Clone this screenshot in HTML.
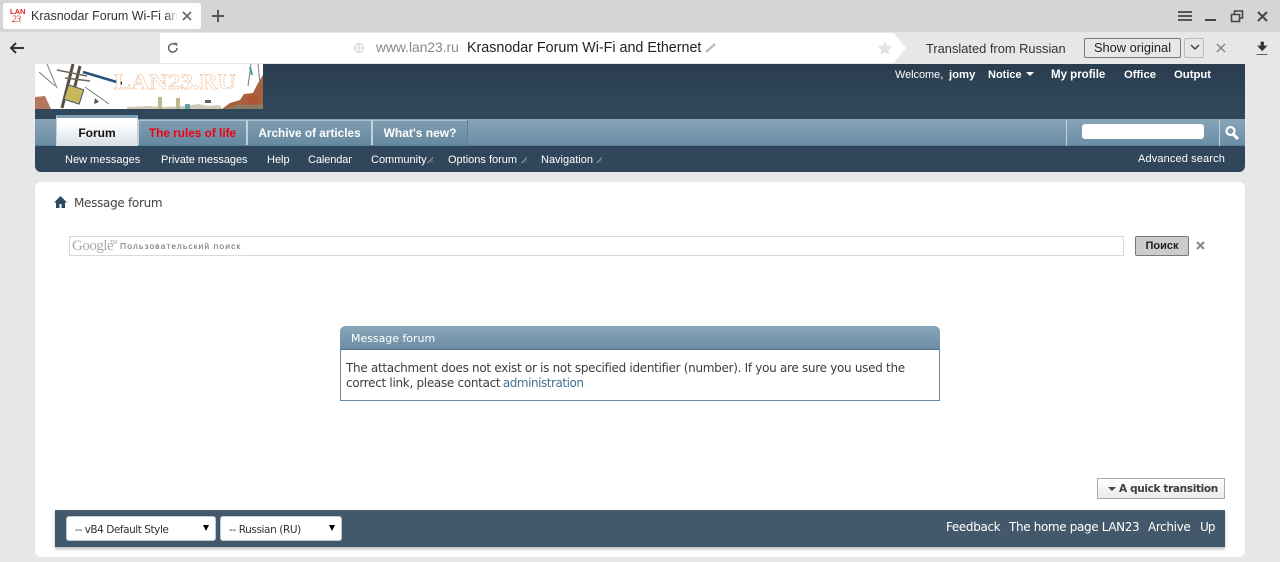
<!DOCTYPE html>
<html><head><meta charset="utf-8"><style>
html,body{margin:0;padding:0;width:1280px;height:562px;overflow:hidden;background:#e7e7e7;font-family:"Liberation Sans",sans-serif}
.a{position:absolute;white-space:nowrap}
.nav{font-size:11px;color:#fff;top:154px;line-height:13px}
.top{font-size:11px;color:#fff;top:69px;line-height:13px;font-weight:bold}
.tab{position:absolute;top:120px;height:25px;border-left:1px solid #c2d2dd;border-right:1px solid #c2d2dd;border-top:1px solid #a9bfce;background:linear-gradient(#7f9bb0,#658aa2);box-sizing:border-box;color:#fff;font-weight:bold;font-size:11.8px;text-align:center;line-height:25px}
.v{font-family:"DejaVu Sans",sans-serif}
.ar{position:absolute;width:6px;height:6px;top:157px;background:linear-gradient(135deg,transparent 48%,#80909e 48%,#80909e 60%,#46596b 60%)}
.f{top:520px;font-size:12px;line-height:15px;color:#fff;letter-spacing:-.36px}
</style></head><body>
<div class="a" style="left:0;top:0;width:1280px;height:32px;background:#d5d5d5"></div>
<div class="a" style="left:3px;top:3px;width:198px;height:26px;background:#fff;border-radius:3px"></div>
<div class="a" style="left:10px;top:8px;font:bold 7.5px/8px 'Liberation Sans',sans-serif;color:#d22">LAN</div>
<div class="a" style="left:12px;top:15px;font:italic 9px/9px 'Liberation Serif',serif;color:#d22">23</div>
<div class="a" style="left:31px;top:9px;width:147px;overflow:hidden;font-size:12.5px;line-height:15px;color:#333">Krasnodar Forum Wi-Fi and</div>
<div class="a" style="left:166px;top:8px;width:12px;height:16px;background:linear-gradient(90deg,rgba(255,255,255,0),#fff)"></div>
<svg class="a" style="left:0;top:0" width="1280" height="64">
<path d="M183 12l8 8M191 12l-8 8" stroke="#666" stroke-width="1.7" fill="none"/>
<path d="M218 10v12M212 16h12" stroke="#555" stroke-width="2" fill="none"/>
<path d="M1178 12h14M1178 16h14M1178 20h14" stroke="#444" stroke-width="1.7"/>
<path d="M1205 20h11" stroke="#444" stroke-width="2"/>
<path d="M1231.500 14.500h8v7h-8zM1234.500 14v-3h8v7h-3" stroke="#444" stroke-width="1.600" fill="none"/>
<path d="M1258 12l9 9M1267 12l-9 9" stroke="#444" stroke-width="2"/>
</svg>
<div class="a" style="left:0;top:32px;width:1280px;height:32px;background:#e7e7e7"></div>
<svg class="a" style="left:0;top:32px" width="1280" height="32">
<path d="M160 1H894L906 16 894 31H160z" fill="#fff"/>
<path d="M24 16H11M16 11l-5 5 5 5" stroke="#333" stroke-width="2" fill="none"/>
<path d="M177 16a4.200 4.200 0 1 1-1.500-3.300" stroke="#666" stroke-width="1.500" fill="none"/><path d="M174 10.500l3.500 .5-.5 3.500z" fill="#666"/>
<circle cx="359" cy="16" r="4.500" stroke="#ccc" fill="none"/><path d="M354 16h10M359 11.500v9" stroke="#ccc" fill="none"/>
<path d="M706 20l9-8" stroke="#bbb" stroke-width="2.500"/>
<path d="M885 9l2.200 4.700 5 .6-3.700 3.500 1 5-4.500-2.500-4.500 2.500 1-5-3.700-3.500 5-.6z" fill="#e2e2e2"/>
<path d="M1217 12l8 8M1225 12l-8 8" stroke="#888" stroke-width="1.500"/>
<path d="M1192 14l4 4 4-4" transform="translate(-1,-1)" stroke="#444" stroke-width="1.500" fill="none"/>
<path d="M1261 10h2.500v4h3l-4.250 4.500-4.250-4.500h3zM1256.500 22.500h11" fill="#333" stroke="#333" stroke-width=".8"/>
</svg>
<div class="a" style="left:376px;top:40px;font-size:13.8px;line-height:16px;color:#888">www.lan23.ru</div>
<div class="a" style="left:467px;top:40px;font-size:14.3px;line-height:16px;color:#222">Krasnodar Forum Wi-Fi and Ethernet</div>
<div class="a" style="left:926px;top:41px;font-size:12.87px;line-height:15px;color:#333">Translated from Russian</div>
<div class="a" style="left:1084px;top:38px;width:97px;height:20px;box-sizing:border-box;border:1px solid #777;border-radius:2px;text-align:center;font-size:12.85px;line-height:18px;color:#222">Show original</div>
<div class="a" style="left:1184px;top:38px;width:20px;height:20px;box-sizing:border-box;border:1px solid #bbb;border-radius:2px"></div>

<div class="a" style="left:35px;top:64px;width:1210px;height:108px;background:linear-gradient(#2a3d4e,#30465b 40px);border-radius:0 0 6px 6px"></div>
<svg class="a" style="left:35px;top:64px" width="228" height="45" viewBox="0 0 228 45">
<rect width="228" height="45" fill="#fff"/>
<path d="M0 45V33l10-1 6 13z" fill="#b5785f"/>
<path d="M187 45l8-6 10-3 4-6 9-1 5-10 5-8v34z" fill="#a8603f"/>
<path d="M190 45l15-5 10 1 13-1v5z" fill="#8b7a60"/>
<path d="M213 32h10v8h-10z" fill="#b0553a"/>
<path d="M38 0L27 44M45 2l-9 36" stroke="#56503f" stroke-width="3"/>
<path d="M22 6l30 6M30 14l25 3" stroke="#6b6655" stroke-width="1.500"/>
<path d="M48 8l37 11" stroke="#284f7c" stroke-width="2.500"/>
<circle cx="85" cy="19" r="2" fill="#223"/>
<rect x="31" y="23" width="16" height="15" fill="#c8b75a" stroke="#456" transform="rotate(18 39 30)"/>
<path d="M50 23l24 17M4 8l16 14M12 0l10 24M216 0l-3 22M223 0l2 20" stroke="#7a7f86" stroke-width="1"/>
<path d="M215 3l2 8" stroke="#4a98a0" stroke-width="2"/>
<path d="M60 34l4 4-5 2z" fill="#555"/>
<path d="M92 45h96l-4-4-12 1-8-2-14 2-22 1-14-1-22 1z" fill="#cfc9b8"/>
<path d="M123 33h4v12h-4zM141 34h4v11h-4z" fill="#bdb68e"/>
<path d="M150 40h5v5h-5z" fill="#5ca4a8"/><path d="M170 36h6v3h-6z" fill="#567"/>
<text x="79" y="25" font-family="Liberation Serif,serif" font-weight="bold" font-size="22" fill="#fff" stroke="#eeb98f" stroke-width=".8" stroke-dasharray="1.500 1" textLength="122" lengthAdjust="spacingAndGlyphs">LAN23.RU</text>
</svg>
<div class="a top" style="left:895px;font-weight:normal;font-size:10.9px">Welcome,</div>
<div class="a top" style="left:949px;font-size:11.3px">jomy</div>
<div class="a top" style="left:988px">Notice</div>
<div class="a" style="left:1026px;top:72px;border:4px solid transparent;border-top:4px solid #fff;border-left-width:4.500px;border-right-width:4.500px"></div>
<div class="a top" style="left:1051px;font-size:11.5px">My profile</div>
<div class="a top" style="left:1124px;font-size:11.3px">Office</div>
<div class="a top" style="left:1174px;font-size:11.3px">Output</div>

<div class="a" style="left:35px;top:119px;width:1210px;height:27px;background:linear-gradient(#88a4b8,#6b8ea6);border-bottom:1px solid #5e7e95;box-sizing:border-box"></div>
<div class="tab" style="left:56px;top:115px;width:82px;height:31px;background:linear-gradient(#fff,#fff 5px,#d6dfe5);border-top:3px solid #7f9db2;color:#111;line-height:30px;font-size:12px">Forum</div>
<div class="tab" style="left:138px;width:109px;color:#f2000f">The rules of life</div>
<div class="tab" style="left:247px;width:125px">Archive of articles</div>
<div class="tab" style="left:372px;width:96px;font-size:12px">What's new?</div>
<div class="a" style="left:467px;top:120px;width:1px;height:25px;background:#5f8098"></div>
<div class="a" style="left:1066px;top:120px;width:154px;height:26px;box-sizing:border-box;border-left:1px solid #c2d2dd;border-right:1px solid #c2d2dd"></div>
<div class="a" style="left:1082px;top:124px;width:122px;height:15px;background:#fff;border-radius:3px"></div>
<svg class="a" style="left:1224px;top:124px" width="18" height="17"><circle cx="6.500" cy="7" r="4" fill="none" stroke="#fff" stroke-width="2.200"/><path d="M9.500 10.500L14 15" stroke="#fff" stroke-width="3"/></svg>

<div class="a nav" style="left:65px">New messages</div>
<div class="a nav" style="left:161px;letter-spacing:-.06px">Private messages</div>
<div class="a nav" style="left:267px">Help</div>
<div class="a nav" style="left:308px;letter-spacing:-.1px">Calendar</div>
<div class="a nav" style="left:371px">Community</div><div class="ar" style="left:427px"></div>
<div class="a nav" style="left:448px">Options forum</div><div class="ar" style="left:521px"></div>
<div class="a nav" style="left:541px">Navigation</div><div class="ar" style="left:596px"></div>
<div class="a nav" style="left:1138px;top:153px;letter-spacing:.13px">Advanced search</div>

<div class="a" style="left:35px;top:182px;width:1210px;height:375px;background:#fff;border-radius:6px"></div>
<svg class="a" style="left:54px;top:196px" width="14" height="13"><path d="M6.500 0L0 6.500h2V12h3.500V8h2v4H11V6.500h2z" fill="#2f4a60"/></svg>
<div class="a v" style="left:74px;top:196px;font-size:12px;line-height:15px;color:#444;letter-spacing:-.3px">Message forum</div>

<div class="a" style="left:69px;top:236px;width:1055px;height:20px;box-sizing:border-box;border:1px solid #d9d9d9"></div>
<div class="a" style="left:72px;top:238px;font:15px/16px 'Liberation Serif',serif;color:#aaa;letter-spacing:-.5px">Google</div>
<div class="a" style="left:110px;top:240px;font-size:5px;line-height:6px;color:#999">TM</div>
<div class="a" style="left:120px;top:241px;font-size:8.500px;line-height:11px;color:#666;letter-spacing:1.1px">Пользовательский поиск</div>
<div class="a" style="left:1135px;top:236px;width:54px;height:20px;box-sizing:border-box;background:#ccc;border:1px solid #777;border-radius:2px;text-align:center;font-size:11px;font-weight:bold;line-height:18px;color:#222">Поиск</div>
<svg class="a" style="left:1196px;top:241px" width="9" height="9"><path d="M1 1l7 7M8 1L1 8" stroke="#888" stroke-width="2"/></svg>

<div class="a" style="left:340px;top:326px;width:600px;height:75px;box-sizing:border-box;border:1px solid #668aa3;border-radius:6px 6px 0 0;background:#fff"></div>
<div class="a v" style="left:340px;top:326px;width:600px;height:24px;box-sizing:border-box;padding-left:11px;background:linear-gradient(#8ba7ba,#6c8da5);border-bottom:1px solid #4f7088;border-radius:6px 6px 0 0;color:#fff;font-size:11px;line-height:25px;letter-spacing:-.03px">Message forum</div>
<div class="a v" style="left:346px;top:361px;font-size:12px;line-height:15px;color:#3e3e3e;letter-spacing:-.3px">The attachment does not exist or is not specified identifier (number). If you are sure you used the<br>correct link, please contact <span style="color:#417394;letter-spacing:-.46px;margin-left:-1px">administration</span></div>

<div class="a v" style="left:1097px;top:478px;width:128px;height:21px;box-sizing:border-box;border:1px solid #aaa;background:linear-gradient(#fff,#eaeaea);font-size:10.5px;font-weight:bold;line-height:20px;color:#3e3e3e;padding-left:21px;letter-spacing:-.35px">A quick transition</div>
<div class="a" style="left:1108px;top:487px;border:4px solid transparent;border-top:4px solid #444"></div>

<div class="a" style="left:55px;top:510px;width:1170px;height:37px;background:#44586b;box-shadow:0 2px 3px #bbb"></div>
<div class="a" style="left:66px;top:516px;width:150px;height:25px;box-sizing:border-box;background:#fff;border:1px solid #b8cad6;border-radius:3px"></div>
<div class="a v" style="left:75px;top:523px;font-size:10.5px;line-height:15px;color:#333;letter-spacing:-.45px">-- vB4 Default Style</div>
<div class="a" style="left:203px;top:525px;width:0;height:0;border-left:3px solid transparent;border-right:3px solid transparent;border-top:6px solid #000"></div>
<div class="a" style="left:220px;top:516px;width:122px;height:25px;box-sizing:border-box;background:#fff;border:1px solid #b8cad6;border-radius:3px"></div>
<div class="a v" style="left:229px;top:523px;font-size:10.5px;line-height:15px;color:#333;letter-spacing:-.4px">-- Russian (RU)</div>
<div class="a" style="left:329px;top:525px;width:0;height:0;border-left:3px solid transparent;border-right:3px solid transparent;border-top:6px solid #000"></div>
<div class="a v f" style="left:946px">Feedback</div>
<div class="a v f" style="left:1009px">The home page LAN23</div>
<div class="a v f" style="left:1148px">Archive</div>
<div class="a v f" style="left:1200px;letter-spacing:-.9px">Up</div>
</body></html>
